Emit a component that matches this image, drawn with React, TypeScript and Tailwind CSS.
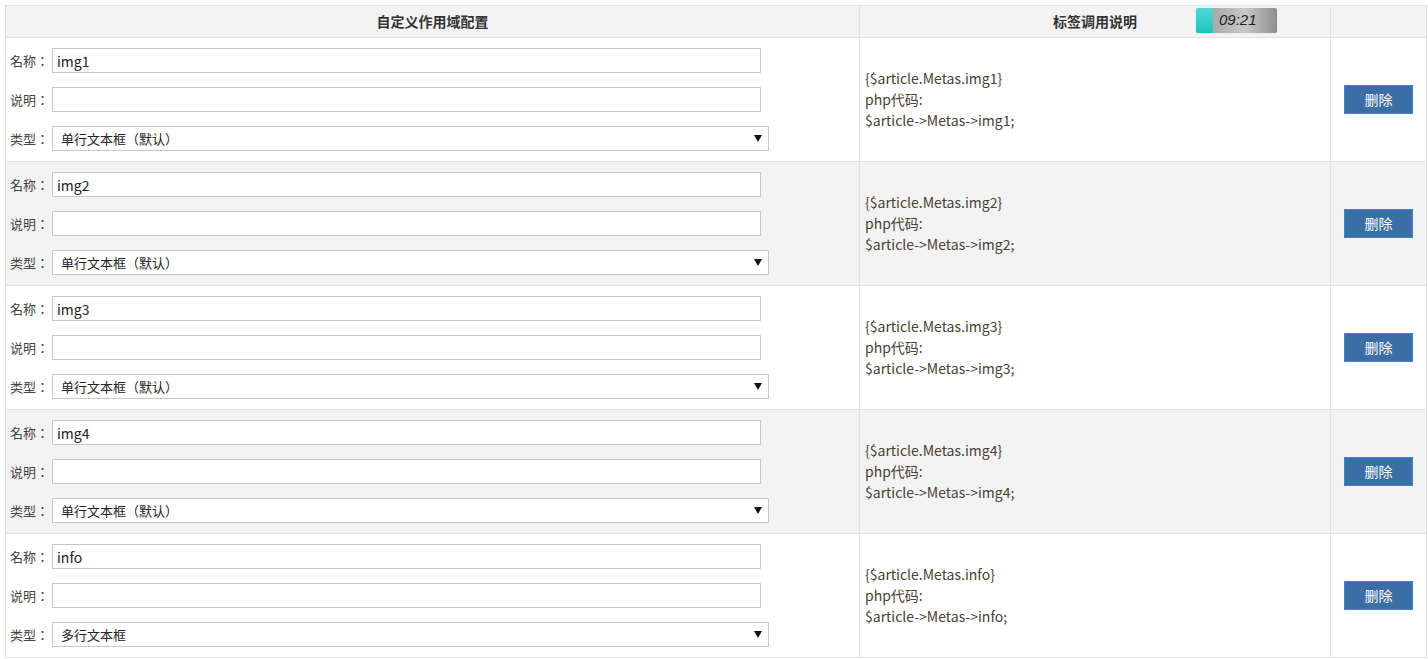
import React from "react";

const rows = [
  { name: "img1", type: "单行文本框（默认）" },
  { name: "img2", type: "单行文本框（默认）" },
  { name: "img3", type: "单行文本框（默认）" },
  { name: "img4", type: "单行文本框（默认）" },
  { name: "info", type: "多行文本框" },
];

const font = "font-['Microsoft_YaHei','Noto_Sans_CJK_SC',sans-serif]";

function Field({ label, children }: { label: string; children: React.ReactNode }) {
  return (
    <div className="flex items-center h-[25px]">
      <span className="w-[42px] shrink-0 text-[13px] text-[#444] font-['Noto_Sans_CJK_TC',sans-serif]">{label}</span>
      {children}
    </div>
  );
}

export default function App() {
  return (
    <div className={`relative bg-white p-[5px] ${font} text-[#333]`}>
      <table className="w-[1421px] border-collapse table-fixed">
        <colgroup>
          <col className="w-[854px]" />
          <col className="w-[471px]" />
          <col className="w-[96px]" />
        </colgroup>
        <thead>
          <tr className="bg-[#f3f3f3] h-[32px]">
            <th className="border border-[#e2e2e2] text-[14px] font-bold text-[#333]">自定义作用域配置</th>
            <th className="border border-[#e2e2e2] text-[14px] font-bold text-[#333]">标签调用说明</th>
            <th className="border border-[#e2e2e2]"></th>
          </tr>
        </thead>
        <tbody>
          {rows.map((r, i) => (
            <tr key={r.name} className={i % 2 === 1 ? "bg-[#f3f3f3]" : "bg-white"}>
              <td className="border border-[#e2e2e2] pl-[4px] pt-[10px] pb-[10px] align-top">
                <div className="flex flex-col gap-[14px]">
                  <Field label="名称：">
                    <input
                      readOnly
                      value={r.name}
                      className="w-[709px] h-[25px] border border-[#c8c8c8] bg-white px-[4px] text-[14px] text-[#222] outline-none"
                    />
                  </Field>
                  <Field label="说明：">
                    <input
                      readOnly
                      value=""
                      className="w-[709px] h-[25px] border border-[#c8c8c8] bg-white px-[4px] text-[14px] outline-none"
                    />
                  </Field>
                  <Field label="类型：">
                    <div className="relative w-[717px] h-[25px] border border-[#c8c8c8] bg-white flex items-center pl-[8px] text-[13px] text-[#222]">
                      {r.type}
                      <span className="absolute right-[6px] top-[8px] w-0 h-0 border-l-[4px] border-r-[4px] border-t-[7px] border-l-transparent border-r-transparent border-t-[#111]"></span>
                    </div>
                  </Field>
                </div>
              </td>
              <td className="border border-[#e2e2e2] pl-[5px] align-middle text-[14px] leading-[21px] text-[#4a4034]">
                <div>{`{$article.Metas.${r.name}}`}</div>
                <div>php代码:</div>
                <div>{`$article->Metas->${r.name};`}</div>
              </td>
              <td className="border border-[#e2e2e2] align-middle">
                <div className="flex justify-center">
                  <button className="w-[69px] h-[29px] bg-[#3a6ea5] border border-[#2e8ccb] text-white text-[14px]">
                    删除
                  </button>
                </div>
              </td>
            </tr>
          ))}
        </tbody>
      </table>

      {/* floating clock widget */}
      <div className="absolute left-[1196px] top-[8px] w-[81px] h-[25px] rounded-[2px] overflow-hidden flex shadow-[0_0_1px_rgba(0,0,0,0.3)]">
        <div className="w-[17px] h-full bg-gradient-to-b from-[#4fd8d4] to-[#14c4bf]"></div>
        <div className="flex-1 h-full bg-gradient-to-r from-[#a9a9a9] via-[#c9c9c9] to-[#8e8e8e] flex items-center pl-[6px] text-[15px] italic text-[#222] font-['Liberation_Sans',sans-serif]">
          09:21
        </div>
      </div>
    </div>
  );
}
